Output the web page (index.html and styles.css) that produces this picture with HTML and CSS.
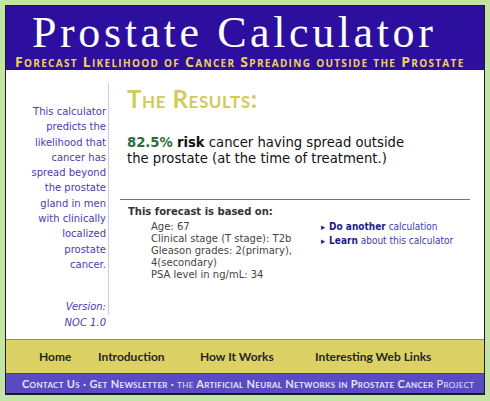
FILE: index.html
```html
<!DOCTYPE html>
<html>
  <head>
    <title>Prostate Calculator</title>
    <link rel="stylesheet" href="styles.css">
  </head>
  <body>
    <div class="page">
      <div class="header">
        <h1 class="title">Prostate Calculator</h1>
        <div class="subtitle">Forecast Likelihood of Cancer Spreading outside the Prostate</div>
      </div>

      <div class="content">
        <div class="sidebar">
          <div class="side-box">
            <p class="about">This calculator predicts the likelihood that cancer has spread beyond the prostate gland in men with clinically localized prostate cancer.</p>
            <p class="version">Version:</p>
          </div>
          <p class="version">NOC 1.0</p>
        </div>

        <div class="main">
          <h2 class="results">The Results:</h2>
          <p class="risk"><span class="pct">82.5%</span> <b>risk</b> cancer having spread outside the prostate (at the time of treatment.)</p>
          <hr class="rule">
          <div class="basis">
            <div class="inputs">
              <h3>This forecast is based on:</h3>
              <ul>
                <li>Age: 67</li>
                <li>Clinical stage (T stage): T2b</li>
                <li>Gleason grades: 2(primary), 4(secondary)</li>
                <li>PSA level in ng/mL: 34</li>
              </ul>
            </div>
            <ul class="links">
              <li><a href="#"><b>Do another</b> calculation</a></li>
              <li><a href="#"><b>Learn</b> about this calculator</a></li>
            </ul>
          </div>
        </div>
      </div>

      <div class="nav">
        <a href="#">Home</a>
        <a href="#">Introduction</a>
        <a href="#">How It Works</a>
        <a href="#">Interesting Web Links</a>
      </div>

      <div class="footer">
        <a href="#">Contact Us</a> &middot; <a href="#">Get Newsletter</a> &middot;
        <span class="thin">the</span> Artificial Neural Networks in Prostate Cancer <span class="thin">Project</span>
      </div>
    </div>
  </body>
</html>
```

FILE: styles.css
```css
body { margin: 0; padding: 5px; background: #c4e4a4; font-family: "DejaVu Sans", Verdana, sans-serif; }
a { text-decoration: none; color: inherit; }
p, h1, h2, h3, ul { margin: 0; padding: 0; }
ul { list-style: none; }

.page {
    width: 478px;
    border: 1px solid #1e1e1e;
    background: #fff;
}

/* header */
.header {
    height: 64px;
    box-sizing: border-box;
    background: #2c0f9e;
    padding: 5px 0 0 9px;
}
.title {
    font-family: "Liberation Serif", "Times New Roman", serif;
    font-weight: normal;
    font-size: 44px;
    line-height: 43px;
    letter-spacing: 3.6px;
    color: #fff;
    padding-left: 17px;
}
.subtitle {
    font-family: "Open Sans", Lato, sans-serif;
    font-weight: bold;
    font-variant: small-caps;
    font-size: 14px;
    line-height: 15px;
    letter-spacing: 1.3px;
    color: #eed257;
}

/* middle */
.content {
    display: flex;
    height: 269px;
}
.sidebar {
    width: 103px;
    flex-shrink: 0;
    font-size: 10px;
    line-height: 15.3px;
    color: #4a3cb0;
    text-align: right;
}
.side-box {
    margin-top: 13px;
    padding: 21px 2px 0 24px;
    border-right: 1px solid #cfc8e6;
}
.version {
    font-style: italic;
    padding-right: 3px;
}
.side-box .version { margin-top: 27px; padding-right: 0; }

.main {
    flex: 1;
    padding: 15px 14px 0 11px;
}
.results {
    font-family: Lato, "Open Sans", sans-serif;
    font-variant: small-caps;
    font-size: 24px;
    line-height: 28px;
    letter-spacing: 0.6px;
    color: #d4ca5c;
    padding-left: 7px;
}
.risk {
    width: 288px;
    margin-top: 22px;
    padding-left: 7px;
    font-size: 13.2px;
    line-height: 16px;
    color: #111;
}
.pct { font-weight: bold; color: #2e6b3e; }
.rule {
    margin: 32px 0 0;
    border: none;
    border-top: 1px solid #777;
}

.basis {
    display: flex;
    padding-left: 8px;
}
.inputs {
    width: 193px;
    color: #444;
    font-size: 10px;
}
.inputs h3 {
    font-size: 10px;
    line-height: 13px;
    margin-top: 5px;
    color: #333;
}
.inputs ul {
    margin-top: 3px;
    padding-left: 23px;
    line-height: 12px;
}
.links {
    margin-top: 20px;
    font-family: "DejaVu Sans Condensed", "Liberation Sans Narrow", sans-serif;
    font-stretch: condensed;
    font-size: 10px;
    line-height: 13px;
    color: #3c3cb0;
}
.links li::before {
    content: "\25B8";
    font-size: 9px;
    color: #1c1c8c;
    margin-right: 4px;
}
.links b { color: #1c1c8c; }

/* bottom bars */
.nav {
    display: grid;
    grid-template-columns: 59px 102px 115px auto;
    height: 34px;
    box-sizing: border-box;
    border-top: 1px solid #8a8a8a;
    background: #dcd165;
    padding-left: 33px;
    align-items: center;
    font-family: Lato, "Open Sans", sans-serif;
    font-weight: bold;
    font-size: 12px;
    color: #262626;
}
.footer {
    height: 21px;
    box-sizing: border-box;
    border-top: 1px solid #4a3ca8;
    border-bottom: 1px solid #1e1e1e;
    background: #5a4bc2;
    padding-left: 16px;
    font-family: Lato, "Open Sans", sans-serif;
    font-weight: bold;
    font-variant: small-caps;
    font-size: 11px;
    line-height: 19px;
    letter-spacing: 0.32px;
    color: #e6e2ff;
}
.thin { font-weight: normal; }
```
